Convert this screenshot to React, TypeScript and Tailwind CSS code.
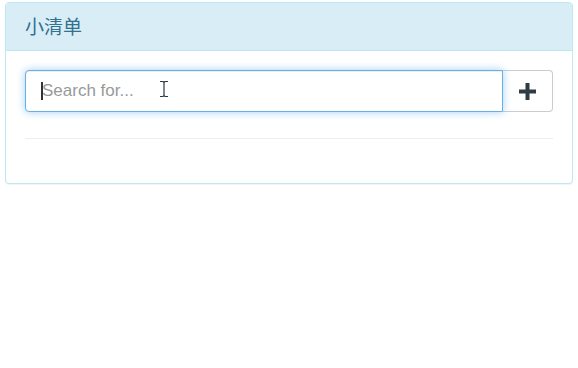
export default function App() {
    return (
        <div className="min-h-[368px] bg-white pl-[5px] pr-[5px] pt-[2px]" style={{ fontFamily: '"Liberation Sans", Arial, sans-serif' }}>
            <div className="w-[568px] rounded-[4px] border border-[#bce8f1] bg-white shadow-[0_1px_1px_rgba(0,0,0,0.05)]">
                <div className="flex h-[48px] items-center rounded-t-[3px] border-b border-[#bce8f1] bg-[#d9edf7] px-[19px]">
                    <h3 className="-mt-[2px] text-[19px] leading-none text-[#31708f]" style={{ fontFamily: '"Noto Sans CJK SC", sans-serif' }}>
                        小清单
                    </h3>
                </div>
                <div className="px-[19px] pt-[19px] pb-[44px]">
                    <div className="flex h-[42px]">
                        <div className="relative flex-1">
                            <input
                                type="text"
                                placeholder="Search for..."
                                className="h-full w-full rounded-l-[4px] border border-[#66afe9] bg-white pl-[16px] text-[17px] text-[#555] outline-none shadow-[inset_0_1px_1px_rgba(0,0,0,0.075),0_0_8px_rgba(102,175,233,0.6)] placeholder:text-[#999]"
                            />
                            <span className="absolute left-[16px] top-[12px] h-[18px] w-[2px] bg-[#333]" />
                            <svg className="absolute left-[134px] top-[10px]" width="10" height="18" viewBox="0 0 10 18">
                                <path d="M1 1.5h3l1 1 1-1h3M5 2.5v13M1 16.5h3l1-1 1 1h3" fill="none" stroke="#2b3a42" strokeWidth="1.2" />
                            </svg>
                        </div>
                        <button className="flex w-[50px] items-center justify-center rounded-r-[4px] border border-l-0 border-[#ccc] bg-white">
                            <svg width="17" height="17" viewBox="0 0 17 17">
                                <path d="M6.5 0h4v6.5H17v4h-6.5V17h-4v-6.5H0v-4h6.5z" fill="#2e3c45" />
                            </svg>
                        </button>
                    </div>
                    <hr className="mt-[26px] border-t border-[#eee]" />
                </div>
            </div>
        </div>
    )
}
